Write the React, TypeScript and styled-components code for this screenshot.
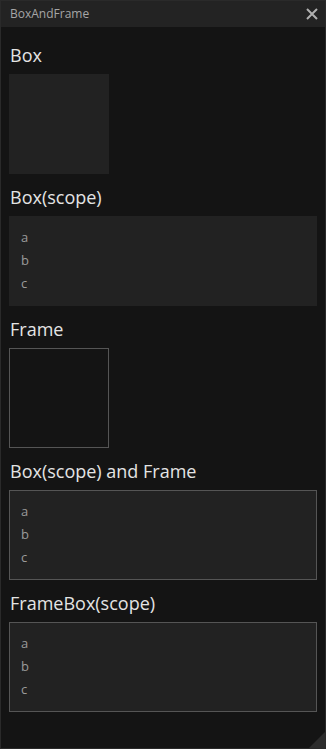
import React from "react";
import styled, { createGlobalStyle } from "styled-components";

const Global = createGlobalStyle`
  html, body { margin: 0; padding: 0; background: #141414; }
  * { box-sizing: border-box; }
`;

const Window = styled.div`
  position: relative;
  width: 326px;
  height: 749px;
  background: #141414;
  border: 1px solid #2a2a2a;
  font-family: "Open Sans", "Noto Sans", sans-serif;
  overflow: hidden;
  display: flex;
  flex-direction: column;
`;

const TitleBar = styled.div`
  height: 26px;
  flex: none;
  background: #232323;
  display: flex;
  align-items: center;
  justify-content: space-between;
  padding: 0 6px 0 9px;
`;

const Title = styled.span`
  font-size: 12px;
  color: #a6a6a6;
  line-height: 26px;
`;

const Close = styled.button`
  width: 14px;
  height: 14px;
  padding: 0;
  border: none;
  background: transparent;
  display: flex;
  align-items: center;
  justify-content: center;
`;

const Content = styled.div`
  flex: 1;
  display: flex;
  flex-direction: column;
  gap: 11px;
  padding: 16px 8px 0 8px;
`;

const Section = styled.section`
  display: flex;
  flex-direction: column;
`;

const Heading = styled.h2`
  margin: 0 0 7px 0;
  font-size: 18px;
  font-weight: 400;
  line-height: 24px;
  color: #e4e4e4;
  padding-left: 1px;
`;

const Panel = styled.div<{ $framed?: boolean; $filled?: boolean; $square?: boolean }>`
  background: ${(p) => (p.$filled ? "#222222" : "transparent")};
  border: ${(p) => (p.$framed ? "1px solid #555555" : "none")};
  width: ${(p) => (p.$square ? "100px" : "auto")};
  height: ${(p) => (p.$square ? "100px" : "90px")};
  padding: ${(p) => (p.$framed ? "9px 11px 10px 11px" : "10px 12px 11px 12px")};
`;

const Item = styled.div`
  font-size: 13px;
  line-height: 23px;
  color: #9a9a9a;
`;

const Grip = styled.svg`
  position: absolute;
  right: 0;
  bottom: 0;
`;

const Items = () => (
  <>
    <Item>a</Item>
    <Item>b</Item>
    <Item>c</Item>
  </>
);

export default function App() {
  return (
    <>
      <Global />
      <Window>
        <TitleBar>
          <Title>BoxAndFrame</Title>
          <Close aria-label="close">
            <svg width="12" height="12" viewBox="0 0 12 12">
              <path d="M1 1 L11 11 M11 1 L1 11" stroke="#b0b0b0" strokeWidth="2" />
            </svg>
          </Close>
        </TitleBar>
        <Content>
          <Section>
            <Heading>Box</Heading>
            <Panel $filled $square />
          </Section>
          <Section>
            <Heading>Box(scope)</Heading>
            <Panel $filled>
              <Items />
            </Panel>
          </Section>
          <Section>
            <Heading>Frame</Heading>
            <Panel $framed $square />
          </Section>
          <Section>
            <Heading>Box(scope) and Frame</Heading>
            <Panel $framed $filled>
              <Items />
            </Panel>
          </Section>
          <Section>
            <Heading>FrameBox(scope)</Heading>
            <Panel $framed $filled>
              <Items />
            </Panel>
          </Section>
        </Content>
        <Grip width="16" height="16" viewBox="0 0 16 16">
          <path d="M16 0 L16 16 L0 16 Z" fill="#2c2c2c" />
        </Grip>
      </Window>
    </>
  );
}
